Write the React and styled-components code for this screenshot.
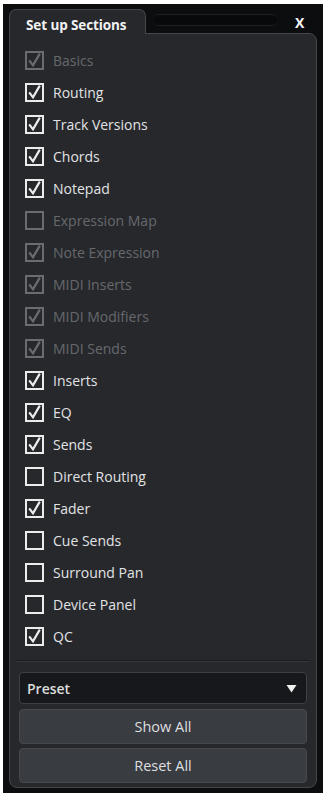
import React from "react";
import styled, { createGlobalStyle } from "styled-components";

const Global = createGlobalStyle`
  html, body { margin: 0; padding: 0; background: #ffffff; }
  body { font-family: "Open Sans", "Noto Sans", sans-serif; }
  * { box-sizing: border-box; }
`;

const Frame = styled.div`
  margin: 4px 0 0 3px;
  width: 320px;
  height: 789px;
  background: #0c0d0f;
  padding: 5px 6px 5px 6px;
  display: flex;
  flex-direction: column;
`;

const TitleBar = styled.div`
  display: flex;
  align-items: stretch;
  height: 26px;
`;

const Tab = styled.div`
  width: 137px;
  background: #26282c;
  border: 1px solid #45474b;
  border-bottom: none;
  border-radius: 7px 7px 0 0;
  color: #f2f2f2;
  font-weight: 700;
  font-size: 13.5px;
  letter-spacing: -0.1px;
  display: flex;
  align-items: center;
  padding-left: 16px;
  padding-top: 6px;
  position: relative;
  z-index: 1;
  margin-bottom: -1px;
`;

const Groove = styled.div`
  flex: 1;
  margin: 5px 18px 7px 8px;
  border-radius: 5px;
  border-top: 1px solid #1e2022;
  border-bottom: 1px solid #1e2022;
  background: #08090a;
`;

const Close = styled.div`
  width: 22px;
  color: #f4f4f4;
  font-weight: 700;
  font-size: 14px;
  display: flex;
  align-items: center;
  justify-content: flex-start;
  padding-top: 2px;
`;

const Panel = styled.div`
  flex: 1;
  background: #26282c;
  border: 1px solid #45474b;
  border-radius: 0 8px 8px 8px;
  display: flex;
  flex-direction: column;
  padding: 10px 9px 4px 9px;
`;

const List = styled.div`
  display: flex;
  flex-direction: column;
  padding-left: 6px;
`;

const Row = styled.div`
  height: 32px;
  display: flex;
  align-items: center;
  gap: 9px;
  color: ${(p) => (p.$disabled ? "#66686c" : "#e2e3e4")};
  font-size: 14px;
`;

const Separator = styled.div`
  margin-top: 8px;
  height: 2px;
  border-top: 1px solid #1a1b1e;
  border-bottom: 1px solid #36383c;
  margin-left: -2px;
  margin-right: -2px;
`;

const Select = styled.div`
  margin-top: 10px;
  height: 32px;
  background: #17181b;
  border: 1px solid #3e4044;
  border-radius: 4px;
  display: flex;
  align-items: center;
  justify-content: space-between;
  padding: 0 9px 0 7px;
  color: #dcdcdc;
  font-size: 14px;
  font-weight: 600;
`;

const Button = styled.div`
  margin-top: ${(p) => p.$gap}px;
  height: 35px;
  background: #393c41;
  border: 1px solid #45484d;
  border-radius: 4px;
  display: flex;
  align-items: center;
  justify-content: center;
  color: #dedfe0;
  font-size: 14.5px;
`;

const Box = ({ checked, disabled }) => {
  const c = disabled ? "#6a6c70" : "#ececec";
  return (
    <svg width="19" height="19" viewBox="0 0 19 19">
      <rect x="1" y="1" width="17" height="17" fill="none" stroke={c} strokeWidth="2" />
      {checked && (
        <path d="M4.2 9.3 L8 14.3 L14.8 2.6" fill="none" stroke={c} strokeWidth="2.2" strokeLinejoin="miter" />
      )}
    </svg>
  );
};

const items = [
  ["Basics", true, true],
  ["Routing", true, false],
  ["Track Versions", true, false],
  ["Chords", true, false],
  ["Notepad", true, false],
  ["Expression Map", false, true],
  ["Note Expression", true, true],
  ["MIDI Inserts", true, true],
  ["MIDI Modifiers", true, true],
  ["MIDI Sends", true, true],
  ["Inserts", true, false],
  ["EQ", true, false],
  ["Sends", true, false],
  ["Direct Routing", false, false],
  ["Fader", true, false],
  ["Cue Sends", false, false],
  ["Surround Pan", false, false],
  ["Device Panel", false, false],
  ["QC", true, false],
];

export default function App() {
  return (
    <>
      <Global />
      <Frame>
        <TitleBar>
          <Tab>Set up Sections</Tab>
          <Groove />
          <Close>X</Close>
        </TitleBar>
        <Panel>
          <List>
            {items.map(([label, checked, disabled]) => (
              <Row key={label} $disabled={disabled}>
                <Box checked={checked} disabled={disabled} />
                <span>{label}</span>
              </Row>
            ))}
          </List>
          <Separator />
          <Select>
            <span>Preset</span>
            <svg width="11" height="9" viewBox="0 0 11 9">
              <path d="M0.5 1 L10.5 1 L5.5 8.5 Z" fill="#f0f0f0" />
            </svg>
          </Select>
          <Button $gap={5}>Show All</Button>
          <Button $gap={4}>Reset All</Button>
        </Panel>
      </Frame>
    </>
  );
}
